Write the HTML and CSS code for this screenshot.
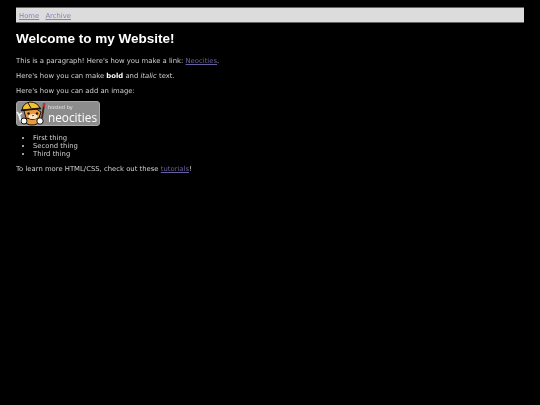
FILE: index.html
```html
<!DOCTYPE html>
<html lang="en">
<head>
    <meta charset="UTF-8">
    <meta name="viewport" content="width=device-width, initial-scale=1.0">
    <title>My Website</title>
    <link rel="stylesheet" href="styles.css">
</head>
<body>
    <div class="page">
        <!-- Top navigation -->
        <nav class="topnav">
            <a href="#">Home</a>
            <a href="#">Archive</a>
        </nav>

        <h1>Welcome to my Website!</h1>

        <p>This is a paragraph! Here's how you make a link: <a href="#">Neocities</a>.</p>
        <p>Here's how you can make <strong>bold</strong> and <em>italic</em> text.</p>
        <p>Here's how you can add an image:</p>

        <!-- Hosted by badge -->
        <div class="badge">
            <svg class="mascot" width="32" height="25" viewBox="0 0 32 25">
                <!-- wrench -->
                <path d="M5 21 L3 13" stroke="#f2f2f2" stroke-width="2" fill="none"/>
                <path d="M1 11 L3 14 L6 12" stroke="#f2f2f2" stroke-width="1.6" fill="none"/>
                <!-- brush -->
                <path d="M28 4 L26 17" stroke="#3a2018" stroke-width="1.8"/>
                <path d="M28.3 2 L27.8 6" stroke="#b5332a" stroke-width="2.4"/>
                <!-- body -->
                <ellipse cx="16" cy="20" rx="7" ry="4" fill="#e8983e" stroke="#1c120c" stroke-width="1"/>
                <!-- head -->
                <path d="M8 10 L10 17 Q16 20 23 17 L25 11 Q17 4 8 10 Z" fill="#ee9a3c" stroke="#1c120c" stroke-width="1"/>
                <ellipse cx="17" cy="15.5" rx="4.5" ry="2.6" fill="#fbe6c4"/>
                <circle cx="12.5" cy="12.5" r="1.2" fill="#1c120c"/>
                <circle cx="21" cy="12.5" r="1.2" fill="#1c120c"/>
                <path d="M16 14 L18 14 L17 15.5 Z" fill="#301510"/>
                <!-- helmet -->
                <path d="M6 9 Q7 2 14 1 Q21 1 24 7 Z" fill="#f0c22c" stroke="#1c120c" stroke-width="1"/>
                <path d="M12 2 L15 7" stroke="#1c120c" stroke-width="1"/>
                <path d="M5 9.5 L25 7.5" stroke="#1c120c" stroke-width="1.3"/>
                <!-- gloves -->
                <circle cx="8" cy="20" r="3" fill="#fafafa" stroke="#1c120c" stroke-width="1"/>
                <circle cx="24" cy="20" r="3.2" fill="#fafafa" stroke="#1c120c" stroke-width="1"/>
            </svg>
            <div class="badge-text">
                <span class="badge-small">hosted by</span>
                <span class="badge-name">neocities</span>
            </div>
        </div>

        <ul>
            <li>First thing</li>
            <li>Second thing</li>
            <li>Third thing</li>
        </ul>

        <p>To learn more HTML/CSS, check out these <a href="#">tutorials</a>!</p>
    </div>
</body>
</html>
```

FILE: styles.css
```css
body {
    font-family: "DejaVu Sans", Verdana, sans-serif;
    font-size: 6.85px;
    line-height: 8px;
    margin: 0;
    background-color: #000000;
    color: #d0d0d0;
}

.page {
    padding: 7px 16px;
    filter: blur(0.25px);
}

a {
    color: #6a5f9e;
}

.topnav {
    background: #dcdcdc;
    border-top: 1px solid #666666;
    border-bottom: 1px solid #666666;
    padding: 4px 3px 2px;
    height: 8px;
    line-height: 9px;
}

.topnav a {
    color: #8a80b8;
    margin-right: 4px;
}

h1 {
    font-family: "Liberation Sans", Arial, sans-serif;
    font-size: 13.5px;
    line-height: 16px;
    font-weight: bold;
    color: #ffffff;
    margin: 8px 0 10px;
}

p {
    margin: 0 0 7px;
}

strong {
    color: #ffffff;
}

.badge {
    display: flex;
    width: 84px;
    height: 25px;
    margin: -1px 0 8px;
    box-sizing: border-box;
    background: #8c8c8c;
    border: 1px solid #a8a8a8;
    border-radius: 3px;
    color: #ffffff;
}

.mascot {
    flex: none;
    margin: -1px 0 0 -1px;
}

.badge-text {
    display: flex;
    flex-direction: column;
    gap: 1px;
    padding: 3px 0 0 0;
}

.badge-small {
    font-size: 5px;
    line-height: 5px;
    color: #e6e6e6;
}

.badge-name {
    font-family: "Open Sans", sans-serif;
    font-size: 11.8px;
    line-height: 12px;
}

ul {
    margin: 0 0 7px;
    padding-left: 17px;
}
```
